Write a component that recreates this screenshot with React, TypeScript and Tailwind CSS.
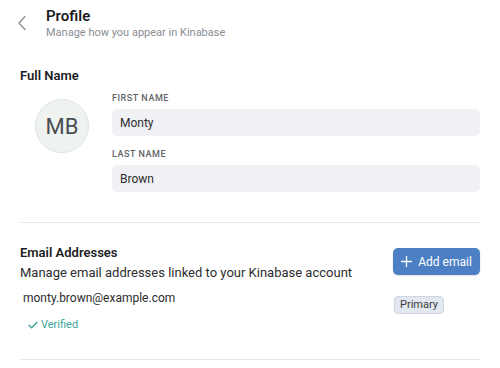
import React from "react";

export default function App() {
  return (
    <div className="w-[500px] h-[368px] overflow-hidden bg-white text-[#1c1c1e]" style={{ fontFamily: "Roboto, 'Noto Sans', sans-serif" }}>
      <div className="flex items-start pt-[6px]">
        <div className="w-[46px] flex justify-center pt-[9px]">
          <svg width="10" height="16" viewBox="0 0 10 16" fill="none" className="ml-[-2px]">
            <path d="M8 1.5L2 8l6 6.5" stroke="#8a8d93" strokeWidth="1.3" strokeLinecap="round" strokeLinejoin="round" />
          </svg>
        </div>
        <div className="flex flex-col">
          <div className="text-[15px] font-semibold leading-[20px] text-[#1c1c1e]">Profile</div>
          <div className="text-[11px] leading-[14px] text-[#8a8d93]">Manage how you appear in Kinabase</div>
        </div>
      </div>

      <div className="px-5">
        <div className="mt-[28px] text-[13px] font-semibold leading-[16px]">Full Name</div>
        <div className="flex mt-[8px]">
          <div className="w-[92px] flex items-start pl-[15px] pt-[7px]">
            <div className="w-[54px] h-[54px] rounded-full bg-[#eef3f0] border border-[#dfe3e1] flex items-center justify-center text-[22px] text-[#4a4d52]">
              MB
            </div>
          </div>
          <div className="flex-1 flex flex-col">
            <div className="text-[9px] font-medium tracking-[0.06em] text-[#5f6368] leading-[12px]">FIRST NAME</div>
            <div className="mt-[5px] h-[27px] rounded-[5px] bg-[#f0f1f4] flex items-center px-[8px] text-[12px] text-[#2c2c2e]">Monty</div>
            <div className="mt-[12px] text-[9px] font-medium tracking-[0.06em] text-[#5f6368] leading-[12px]">LAST NAME</div>
            <div className="mt-[5px] h-[27px] rounded-[5px] bg-[#f0f1f4] flex items-center px-[8px] text-[12px] text-[#2c2c2e]">Brown</div>
          </div>
        </div>

        <div className="mt-[30px] h-px bg-[#e5e7e9]" />

        <div className="flex justify-between items-start mt-[22px]">
          <div className="flex flex-col">
            <div className="text-[13px] font-semibold leading-[16px]">Email Addresses</div>
            <div className="mt-[4px] text-[13px] leading-[16px] text-[#2c2c2e]">Manage email addresses linked to your Kinabase account</div>
          </div>
          <button className="w-[87px] h-[27px] rounded-[5px] bg-[#4d7fc4] text-white text-[12px] flex items-center justify-center gap-[6px] shadow-sm mt-[3px]">
            <svg width="11" height="11" viewBox="0 0 11 11">
              <path d="M5.5 0.5v10M0.5 5.5h10" stroke="white" strokeWidth="1.3" strokeLinecap="round" />
            </svg>
            Add email
          </button>
        </div>

        <div className="flex justify-between items-start mt-[10px]">
          <div className="flex flex-col pl-[3px]">
            <div className="text-[12px] leading-[15px] text-[#2c2c2e]">monty.brown@example.com</div>
            <div className="mt-[12px] ml-[5px] flex items-center gap-[3px] text-[11px] text-[#3aa59a] leading-[14px]">
              <svg width="10" height="8" viewBox="0 0 10 8">
                <path d="M1 4.2l2.6 2.6L9 1.2" stroke="#3aa59a" strokeWidth="1.3" fill="none" strokeLinecap="round" strokeLinejoin="round" />
              </svg>
              Verified
            </div>
          </div>
          <div className="mr-[36px] mt-[5px] h-[18px] w-[50px] justify-center rounded-[4px] bg-[#e3e8f0] border border-[#cfd6e0] text-[11px] text-[#3a3d42] flex items-center">Primary</div>
        </div>

        <div className="mt-[27px] h-px bg-[#e5e7e9]" />
      </div>
    </div>
  );
}
